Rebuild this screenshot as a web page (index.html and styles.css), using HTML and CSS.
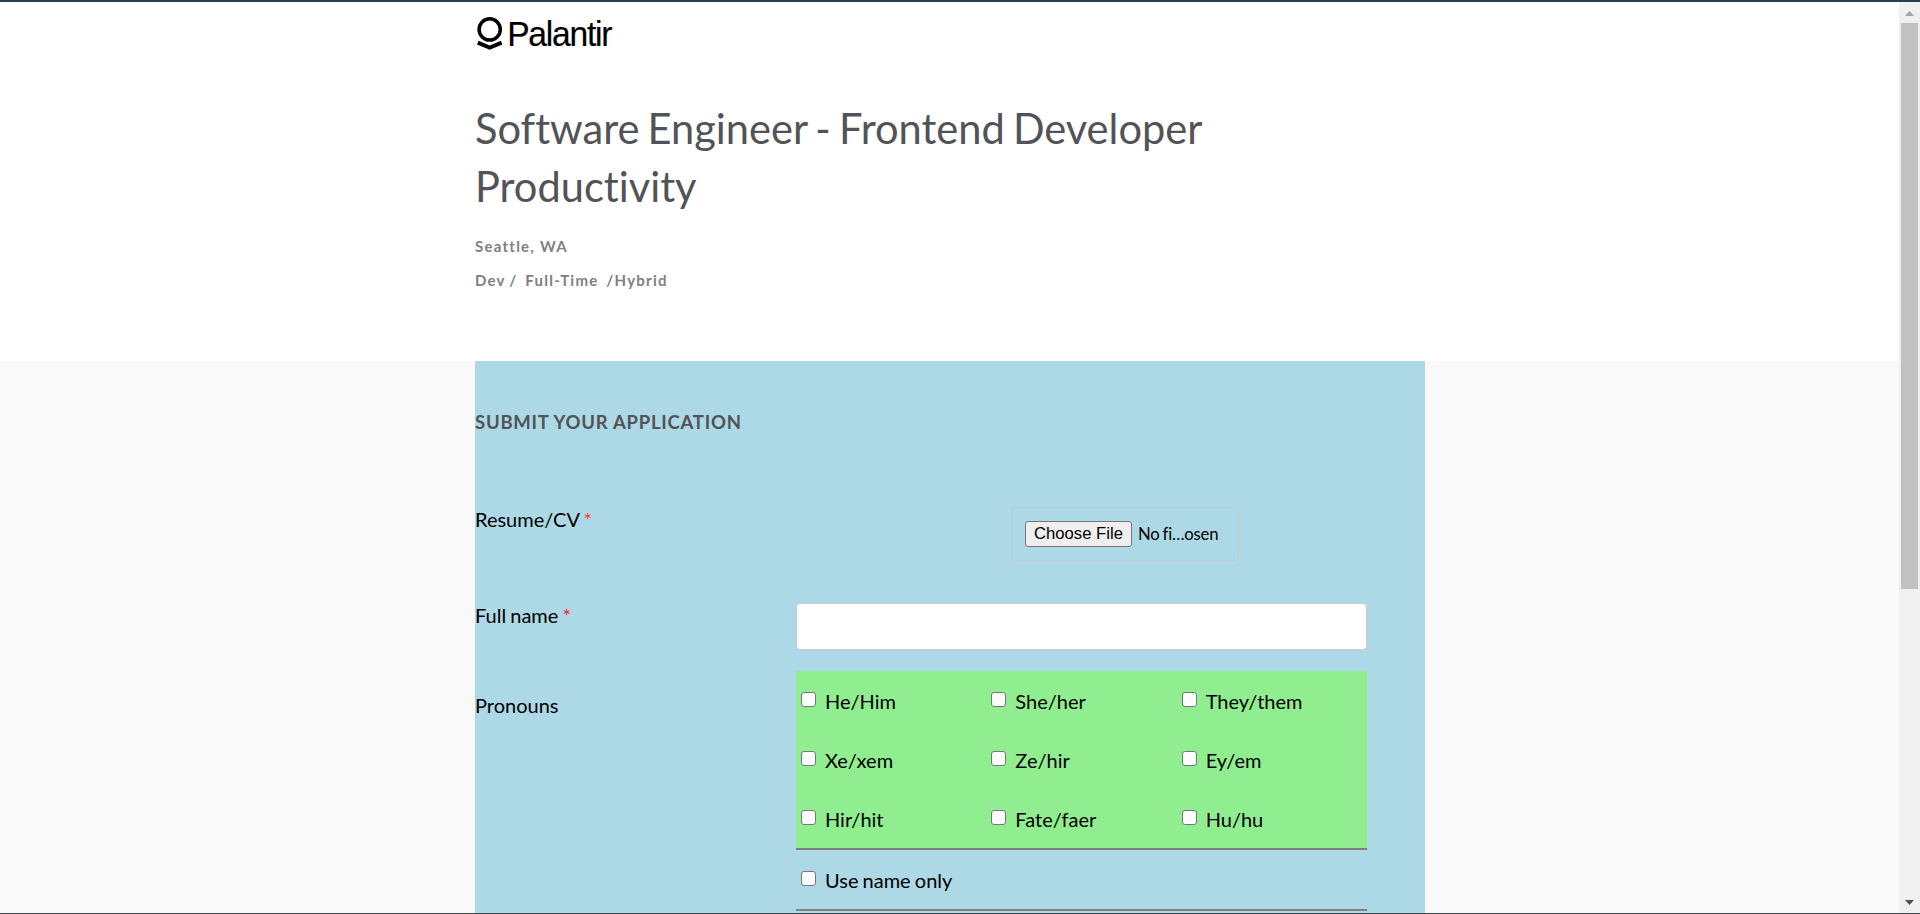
FILE: index.html
```html
<!DOCTYPE html>
<html lang="en">
<head>
<meta charset="utf-8">
<title>Palantir - Software Engineer</title>
<link rel="stylesheet" href="styles.css">
</head>
<body>
<div class="window">
  <div class="page">
    <header class="header">
      <div class="container">
        <svg class="logo" width="140" height="40" viewBox="0 0 140 40">
          <circle cx="14.7" cy="17.4" r="10.6" fill="none" stroke="#000" stroke-width="3.5"/>
          <path d="M3.5 28.8 14.7 33.5 25.9 28.8 27.4 32.4 14.7 37.8 2 32.4Z"/>
          <text class="wordmark" x="32.2" y="33.6" textLength="104" lengthAdjust="spacingAndGlyphs">Palantir</text>
        </svg>
        <h1 class="title">Software Engineer - Frontend Developer Productivity</h1>
        <p class="meta">Seattle, WA</p>
        <p class="meta">Dev /&nbsp; Full-Time &nbsp;/Hybrid</p>
      </div>
    </header>
    <main class="main">
      <form class="container form">
        <h2 class="heading">SUBMIT YOUR APPLICATION</h2>
        <div class="field resume">
          <span class="label">Resume/CV <span class="star">*</span></span>
          <div class="file"><button type="button" class="choose">Choose File</button><span class="filename">No fi…osen</span></div>
        </div>
        <div class="field name">
          <label class="label" for="name">Full name <span class="star pink">*</span></label>
          <input class="text" id="name" type="text">
        </div>
        <div class="field">
          <span class="label pronouns">Pronouns</span>
          <div>
            <div class="options">
              <label class="option"><input type="checkbox">He/Him</label>
              <label class="option"><input type="checkbox">She/her</label>
              <label class="option"><input type="checkbox">They/them</label>
              <label class="option"><input type="checkbox">Xe/xem</label>
              <label class="option"><input type="checkbox">Ze/hir</label>
              <label class="option"><input type="checkbox">Ey/em</label>
              <label class="option"><input type="checkbox">Hir/hit</label>
              <label class="option"><input type="checkbox">Fate/faer</label>
              <label class="option"><input type="checkbox">Hu/hu</label>
            </div>
            <div class="only"><label class="option"><input type="checkbox">Use name only</label></div>
          </div>
        </div>
      </form>
    </main>
  </div>
  <div class="scrollbar">
    <svg class="arrow" width="9" height="5" viewBox="0 0 9 5"><path fill="#a3a3a3" d="M0 5 4.5 0 9 5Z"/></svg>
    <div class="thumb"></div>
    <svg class="arrow down" width="9" height="5" viewBox="0 0 9 5"><path fill="#505050" d="M0 0H9L4.5 5Z"/></svg>
  </div>
</div>
</body>
</html>
```
FILE: styles.css
```css
* { box-sizing: border-box; }
body { margin: 0; font-family: Lato, sans-serif; font-size: 20px; word-spacing: -1px; color: #000; overflow: hidden; }
h1, h2, p { margin: 0; }
.window { display: flex; height: 914px; border-top: 2px solid #2c3e4c; border-bottom: 1px solid #454a4d; overflow: hidden; }
.page { flex: 1; display: flex; flex-direction: column; min-width: 0; }
.container { width: 950px; margin: 0 0 0 475px; }
.header { height: 359px; padding-top: 10px; background: #fff; }
.logo { display: block; }
.wordmark { font-family: "Liberation Sans", sans-serif; font-size: 35px; letter-spacing: -1.3px; stroke: #000; stroke-width: .2px; }
.title { width: 780px; margin-top: 47px; font-size: 41.6px; font-weight: 400; line-height: 58px; word-spacing: -2.5px; font-variant-ligatures: none; color: #515357; }
.meta { font-size: 15px; font-weight: 700; letter-spacing: 1.25px; line-height: 34px; color: #808080; }
.title + .meta { margin-top: 14px; word-spacing: 0; }
.main { flex: 1; background: #f9f9f9; min-height: 0; }
.form { height: 552px; background: #add8e6; overflow: hidden; }
.heading { padding-top: 49px; font-size: 18.5px; font-weight: 700; letter-spacing: .75px; word-spacing: 0; line-height: 24px; color: #515357; }
.field { display: grid; grid-template-columns: 321px 571px; align-items: start; }
.resume { margin-top: 73px; height: 96px; }
.name { height: 68px; }
.label { line-height: 24px; }
.pronouns { margin-top: 22px; }
.star { color: #ff3b1f; }
.pink { color: #ff1744; }
.file { display: flex; align-items: center; width: 228px; height: 54px; margin-left: 215px; padding-left: 13px; border: 1px solid #c3c8ce; border-radius: 4px; }
.choose { width: 107px; height: 26px; padding: 0; border: 1px solid #767676; border-radius: 3px; background: #efefef; font: 16.67px "Liberation Sans", sans-serif; color: #000; }
.filename { margin-left: 6px; font-size: 16.67px; letter-spacing: -.2px; }
.text { width: 571px; height: 47px; border: 1px solid #ccc; border-radius: 4px; background: #fff; }
.options { display: grid; grid-template-columns: repeat(3, 1fr); background: #90ee90; border-bottom: 2px solid #808080; }
.option { display: flex; align-items: center; height: 59px; padding: 0 0 0 5px; }
.option input { appearance: none; width: 15px; height: 15px; margin: -3px 9px 0 0; border: 1px solid #767676; border-radius: 3px; background: #fff; }
.only { height: 61px; border-bottom: 2px solid #808080; }
.only .option { padding-top: 1px; }
.scrollbar { display: flex; flex-direction: column; align-items: center; width: 21px; padding: 9px 0 8px; background: #f0f0f0; }
.arrow { display: block; flex: none; }
.thumb { width: 17px; height: 566px; margin-top: 7px; background: #c1c1c1; }
.down { margin-top: auto; }
```
